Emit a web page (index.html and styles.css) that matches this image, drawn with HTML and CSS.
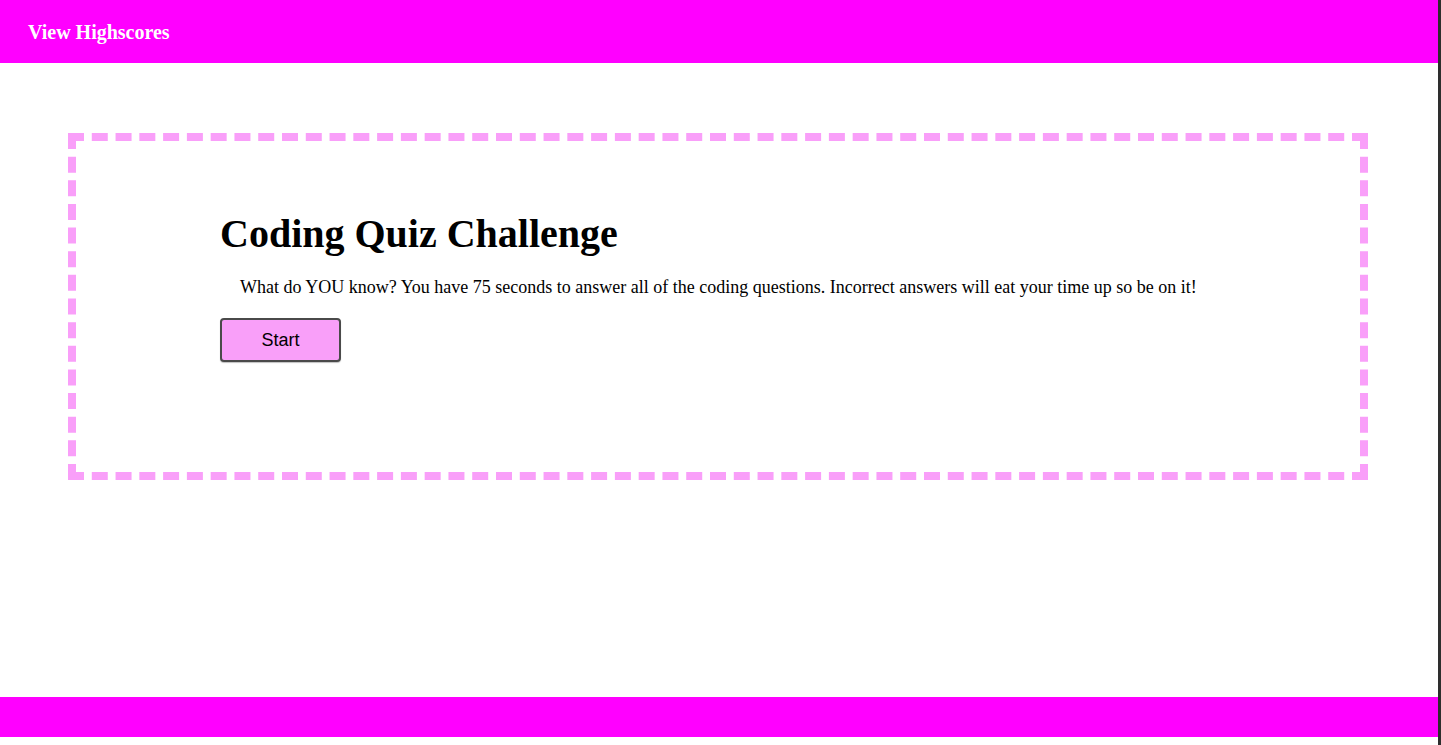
FILE: index.html
```html
<!DOCTYPE html>
<html lang="en">
<head>
<meta charset="utf-8">
<title>Coding Quiz Challenge</title>
<link rel="stylesheet" href="styles.css">
</head>
<body>
<div class="page">
  <header class="topbar">
    <a class="highscores" href="#">View Highscores</a>
  </header>
  <main class="main">
    <section class="quiz-box">
      <div class="intro">
        <h1 class="title">Coding Quiz Challenge</h1>
        <p class="lead">What do YOU know? You have 75 seconds to answer all of the coding questions. Incorrect answers will eat your time up so be on it!</p>
        <button class="start-btn" type="button">Start</button>
      </div>
    </section>
  </main>
  <footer class="footer"></footer>
</div>
</body>
</html>
```
FILE: styles.css
```css
html {
  background: #2e2e2e;
}
body {
  margin: 0;
  height: 745px;
  overflow: hidden;
  font-family: "Liberation Serif", "Times New Roman", serif;
}
.page {
  width: 1438px;
  height: 745px;
  background: #ffffff;
  display: flex;
  flex-direction: column;
}
.topbar {
  height: 63px;
  background: #ff00ff;
  display: flex;
  align-items: center;
  padding-left: 28px;
  flex-shrink: 0;
}
.highscores {
  color: #ffffff;
  font-weight: bold;
  font-size: 20px;
  line-height: 23px;
  margin-top: 1px;
  text-decoration: none;
}
.main {
  flex: 1;
  padding: 70px 0 0 68px;
}
.quiz-box {
  width: 1300px;
  height: 347px;
  box-sizing: border-box;
  border: 8px dashed #f99ff9;
  padding: 70px 0 0 144px;
}
.intro {
  display: flex;
  flex-direction: column;
  align-items: flex-start;
}
.title {
  margin: 0;
  font-size: 40px;
  line-height: 46px;
  font-weight: bold;
  color: #000;
}
.lead {
  margin: 20px 0 0 20px;
  font-size: 18px;
  line-height: 21px;
  color: #000;
}
.start-btn {
  margin-top: 20px;
  width: 121px;
  height: 44px;
  background: #f99ff9;
  border: 2px solid #4a4a4a;
  border-radius: 4px;
  font-family: "Liberation Sans", Arial, sans-serif;
  font-size: 18px;
  color: #000;
  box-shadow: 0 1px 1px rgba(0,0,0,0.25);
  cursor: pointer;
}
.footer {
  height: 40px;
  margin-bottom: 8px;
  background: #ff00ff;
  flex-shrink: 0;
}
```
